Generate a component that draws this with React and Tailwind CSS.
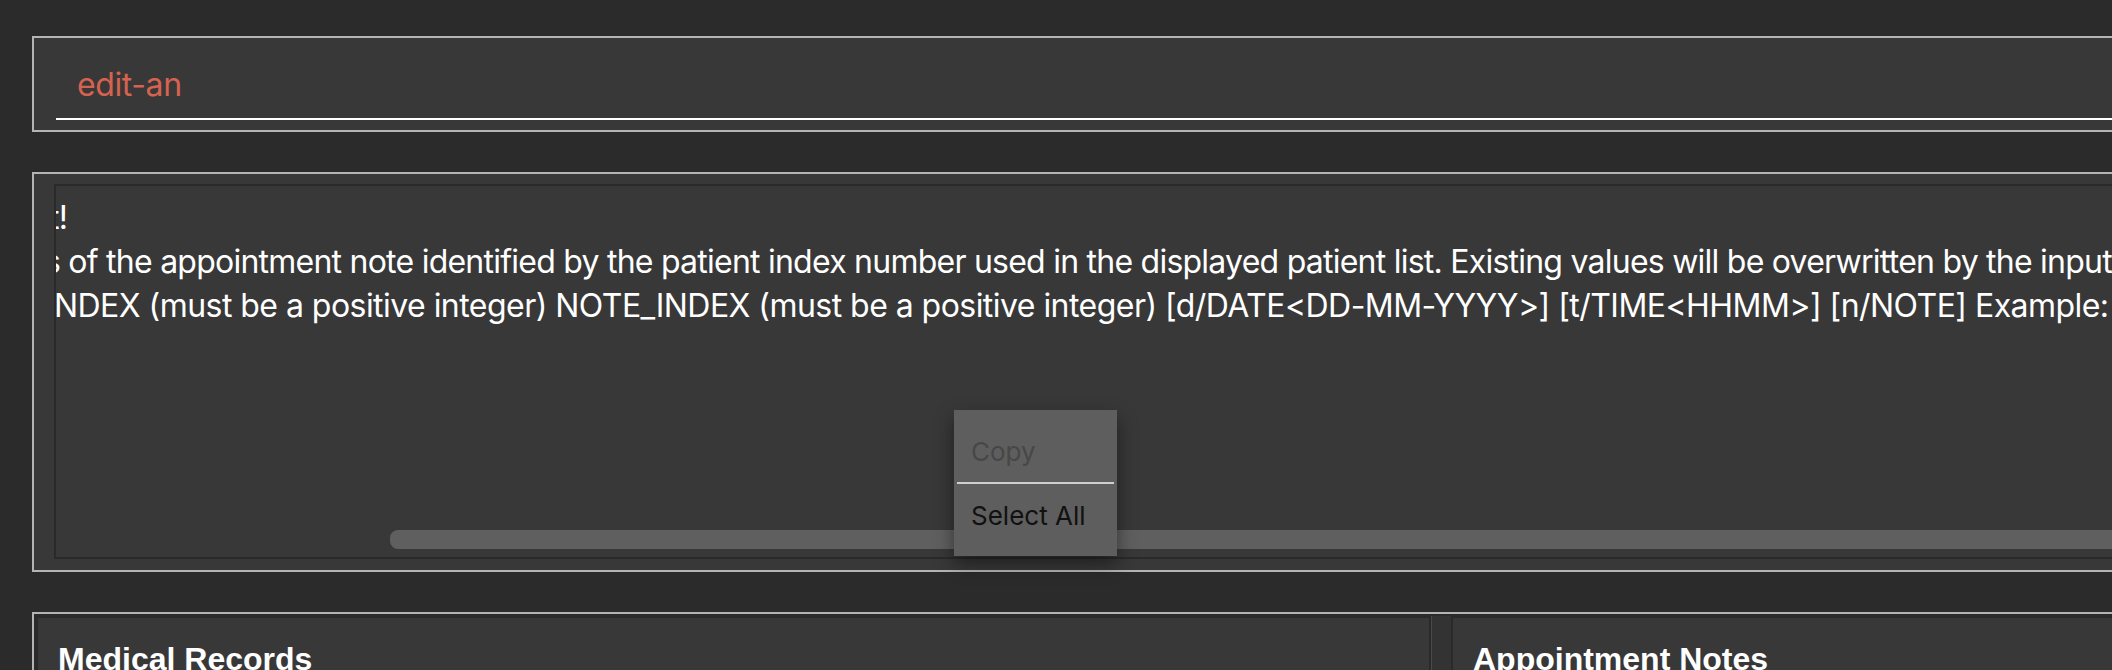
import React from 'react';

const RESULT_LINES = [
  { text: 't!', cls: 'ml-[-7px] tracking-[-0.65px]' },
  { text: 's of the appointment note identified by the patient index number used in the displayed patient list. Existing values will be overwritten by the input', cls: 'ml-[-12px] tracking-[-0.76px]' },
  { text: 'NDEX (must be a positive integer) NOTE_INDEX (must be a positive integer) [d/DATE<DD-MM-YYYY>] [t/TIME<HHMM>] [n/NOTE] Example:', cls: 'ml-[-2px] tracking-[-0.54px]' },
];

function Panel({ title, className }) {
  return (
    <div className={`border-2 border-[#2a2a2a] bg-[#383838] h-[200px] pt-[25px] pl-[20px] ${className}`}>
      <h2 className="font-['Liberation_Sans',Arial,sans-serif] font-bold text-[32px] leading-[32px] text-white">{title}</h2>
    </div>
  );
}

export default function App() {
  return (
    <div className="relative w-[2112px] h-[670px] overflow-hidden bg-[#2b2b2b] pt-[36px] pl-[32px] font-['Inter',sans-serif]">
      <div className="w-[2200px] flex flex-col gap-[40px]">
        {/* Command box */}
        <div className="border-2 border-[#b4b4b4] bg-[#383838] pt-[25px] pb-[10px] pl-[22px]">
          <div className="border-b-2 border-white pl-[21px] pb-[11px] text-[32px] leading-[44px] text-[#d6624f] tracking-[-0.4px]">
            edit-an
          </div>
        </div>

        {/* Result display */}
        <div className="border-2 border-[#b4b4b4] bg-[#383838] pt-[10px] pb-[11px] pl-[20px]">
          <div className="relative h-[375px] overflow-hidden border-2 border-[#2a2a2a] bg-[#383838] pt-[10px]">
            {RESULT_LINES.map((line, i) => (
              <div key={i} className={`whitespace-nowrap text-[32px] leading-[44px] text-white ${line.cls}`}>
                {line.text}
              </div>
            ))}
            <div className="absolute left-[334px] bottom-[8px] h-[19px] w-[2000px] rounded-[8px] bg-[#5f5f5f]" />
          </div>
        </div>

        {/* Lists */}
        <div className="flex border-2 border-[#b4b4b4] p-[2px]">
          <Panel title="Medical Records" className="w-[1395px] shrink-0" />
          <div className="w-[20px] shrink-0 bg-[#333333] border-l border-[#4a4a4a]" />
          <Panel title="Appointment Notes" className="flex-1" />
        </div>
      </div>

      {/* Context menu */}
      <div className="absolute left-[954px] top-[410px] w-[163px] h-[146px] bg-[#5e5e5e] shadow-[0_8px_18px_rgba(0,0,0,0.45)] text-[26px] leading-[32px]">
        <div className="pt-[26px] pl-[17px] text-[#474747]">Copy</div>
        <div className="mt-[14px] mx-[3px] h-[2px] bg-[#cfcfcf]" />
        <div className="pt-[16px] pl-[17px] text-[#111111]">Select All</div>
      </div>
    </div>
  );
}
